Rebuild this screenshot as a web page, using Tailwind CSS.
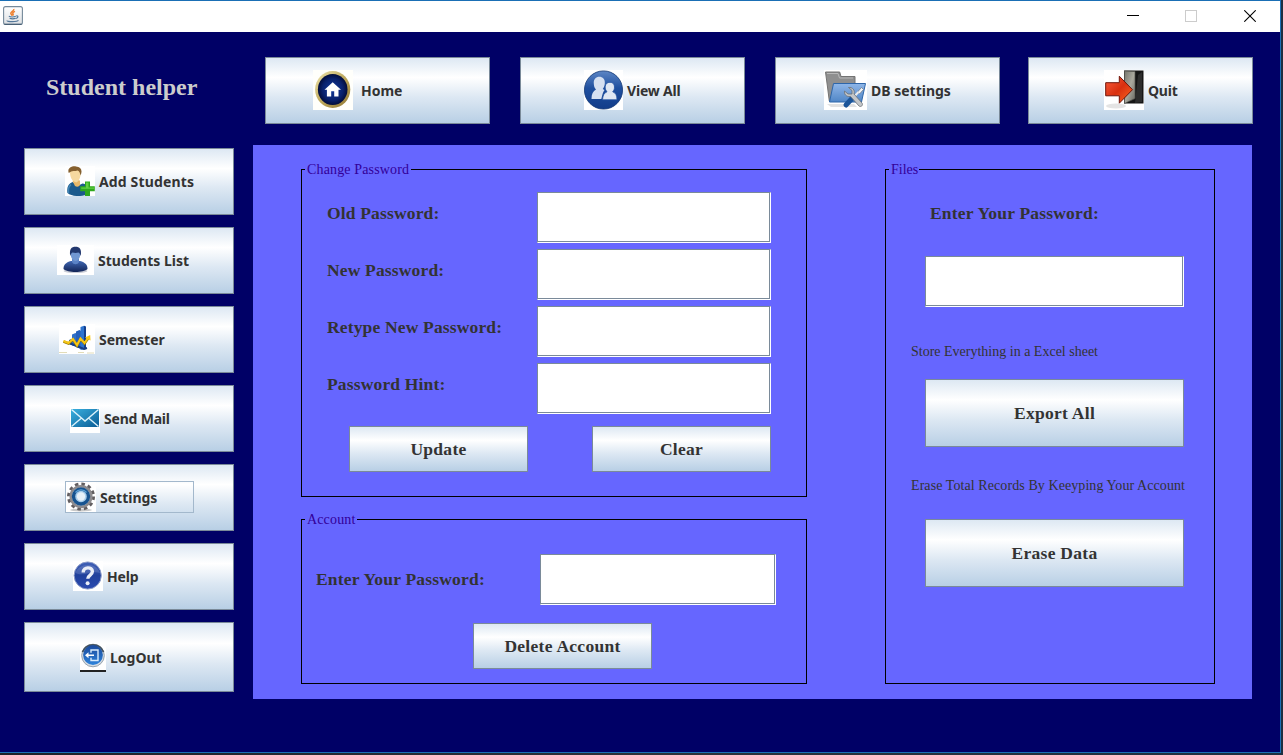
<!DOCTYPE html>
<html lang="en">
<head>
<meta charset="utf-8">
<title>Student helper</title>
<script src="https://cdn.jsdelivr.net/npm/@tailwindcss/browser@4"></script>
</head>
<body class="w-[1283px] h-[755px] overflow-hidden bg-linear-to-r from-[#1c2128] via-[#2b3038] to-[#1c2f40] text-[#333333]">
<div class="w-[1281px] h-[753px] border-t border-r border-b border-[#1a6fb5] bg-[#000066] flex flex-col [&_button]:flex [&_button]:border [&_button]:border-[#7a8a99] [&_button]:bg-[linear-gradient(#dde8f3_0%,#fff_30%,#dde8f3_60%,#b8cfe5_100%)]">
  <header class="h-[31px] bg-white flex items-start shrink-0">
    <svg class="ml-[3px] mt-[5px]" width="20" height="19" viewBox="0 0 20 19">
      <defs><linearGradient id="jv" x1="0" y1="0" x2="0" y2="1"><stop offset="0" stop-color="#fff"/><stop offset="1" stop-color="#dcdfe2"/></linearGradient></defs>
      <rect x=".6" y=".6" width="18.8" height="17.8" rx="2" fill="url(#jv)" stroke="#74899a" stroke-width="1.1"/>
      <path d="M1.500 18.300h17" stroke="#3f586d" stroke-width="1"/>
      <path d="M10.800 3C11.500 5 7.600 5.600 7.800 7.400c.1.900 1 1.300 1.400 2.300M12 5.400c-2 .8-2.600 1.600-2 2.500.4.600.2 1.100-.3 1.500" fill="none" stroke="#ee7f2d" stroke-width="1.500"/>
      <path d="M5.800 10.300c2 .8 5 .8 7 0M6.600 12.300c2 .7 4 .7 6 0M13.200 10c2.400-.5 2.200 1.900-.4 2.500M4.200 14.400c-.8 1.600 10 1.900 11.200-.1" fill="none" stroke="#54789a" stroke-width="1.200"/>
    </svg>
    <div class="ml-auto mr-[24px] mt-[9px] flex gap-[46px]">
      <svg width="12" height="12" shape-rendering="crispEdges"><path d="M0 5h12v1H0z"/></svg>
      <svg width="12" height="12" shape-rendering="crispEdges"><path d="M.5.5h11v11H.5z" fill="none" stroke="#ccc"/></svg>
      <svg class="ml-[1px]" width="12" height="12"><path d="M.3.3l11.400 11.400M11.700.3L.3 11.700" stroke="#000" stroke-width="1.100"/></svg>
    </div>
  </header>

  <div class="flex flex-1">
    <aside class="w-[253px] pl-6 shrink-0">
      <h1 class="mt-[41px] pl-[22px] font-['Liberation_Serif',serif] font-bold text-[24px] leading-[28px] text-[#cccccc]">Student helper</h1>
      <nav class="mt-[47px] flex flex-col gap-3 font-['Noto_Sans',sans-serif] font-bold text-[14px] leading-[20px] whitespace-nowrap [&>button]:w-[210px] [&>button]:items-start">
        <button class="h-[67px] pt-[17px] pl-[40px]">
          <svg width="30" height="30" viewBox="0 0 30 30"><rect width="30" height="30" fill="#fff"/>
            <path d="M2.500 27c-1-6 1-9.500 5-11l6 3.500 4-2c5 .5 6 4 5.500 10-4 3.500-16 3.500-20.500-.5z" fill="#1c5a8c"/>
            <path d="M6 18.500c-2.500 2-3 5-2.500 8.500" stroke="#3f84b5" stroke-width="1.500" fill="none"/>
            <path d="M7.500 15l2.500 5c2.500 1.500 4.500.5 5-1.500v-4l-6-1z" fill="#e8b869"/>
            <path d="M5 6c0-5 10-5 10.500 0 .3 4-.5 8-4 10.500C7 16 5 11 5 6z" fill="#f6d99f"/>
            <path d="M3.800 7C2 2.500 6-.2 11 .4c5 .3 6.800 4 4.600 9-.5-2-1-4.500-3-5C10 5.500 7 4 3.800 7z" fill="#85602f"/>
            <path d="M20 15.500h5v4.700h4.800v5H25V30h-5v-4.800h-4.800v-5H20z" fill="#2fa81d"/><path d="M21 16.500h2.500v5H29v1.300H16.200v-1.300H21z" fill="#63cf43"/></svg>
          <span class="ml-[4px] mt-[6px] tracking-[0.15px]">Add Students</span>
        </button>
        <button class="h-[67px] pt-[17px] pl-[32px]">
          <svg width="37" height="30" viewBox="0 0 37 30"><defs><linearGradient id="sl" x1="0" x2="0" y1="0" y2="1"><stop offset="0" stop-color="#3f66b1"/><stop offset="1" stop-color="#122456"/></linearGradient></defs><rect width="37" height="30" fill="#fff"/>
            <ellipse cx="18.500" cy="26" rx="12" ry="2" fill="#c9ccd6"/>
            <path d="M6.500 24c0-4 2-6.500 7.500-8h9c5.500 1.500 7.500 4 7.500 8-4 4-20 4-24 0z" fill="url(#sl)"/>
            <path d="M15 14h7v3c-1.500 3-5.500 3-7 0z" fill="#5b83c6"/>
            <ellipse cx="18.500" cy="9.500" rx="4.700" ry="6.500" fill="#7197d2"/>
            <path d="M13.300 11C12 4 14.500 1.700 18.500 1.700S25 4 23.700 11c-.7-2-1-3-2.200-3.500-2 .5-4 .5-6 0-1.200.5-1.500 1.500-2.200 3.500z" fill="#22386f"/></svg>
          <span class="ml-[4px] mt-[6px]">Students List</span>
        </button>
        <button class="h-[67px] pt-[17px] pl-[34px]">
          <svg width="36" height="30" viewBox="0 0 36 30"><rect width="36" height="30" fill="#fff"/>
            <path d="M10 16l5-2v8l-5-2z" fill="#1c4fa8"/><path d="M13 10.500l3.500-1.500 1.500 1v13l-5-2z" fill="#2f6fc8"/><path d="M17 7.500l3.500-1.500 1.500 1v18l-5-2z" fill="#2560bb"/><path d="M21.500 3l3.500-1.200 2 1V25l-5.500 1z" fill="#2d74cf"/><path d="M25 1.800l2 1V25l-2 .5z" fill="#143f8d"/>
            <path d="M10 19l15 6 3-1" stroke="#173e84" stroke-width="2" fill="none"/>
            <path d="M4.500 17.500l5 2 4.500-4 4 6 3.500-6.500 4 4.500 3.500-5" stroke="#9a7b00" stroke-width="2.600" fill="none"/>
            <path d="M4.500 17l5 2 4.500-4 4 6 3.500-6.500 4 4.500 3.500-5" stroke="#f6c614" stroke-width="2" fill="none"/>
            <path d="M26 13.500l5.200-2.500.3 5.500z" fill="#f6c614"/><path d="M0 28.500h8M19 28.500h6M28 29h7" stroke="#e2dcb8" stroke-width="1"/></svg>
          <span class="ml-[4px] mt-[6px]">Semester</span>
        </button>
        <button class="h-[67px] pt-[17px] pl-[45px]">
          <svg width="30" height="30" viewBox="0 0 30 30"><defs><linearGradient id="ml" x1="0" x2="1" y1="0" y2="1"><stop offset="0" stop-color="#39b0df"/><stop offset="1" stop-color="#0b5c95"/></linearGradient></defs><rect width="30" height="30" fill="#fff"/>
            <rect x="1" y="6" width="28" height="18" fill="url(#ml)"/>
            <path d="M1.500 6.500L15 18 28.500 6.500M1.500 23.500l10-8.500M28.500 23.500l-10-8.500" stroke="#dcf2fb" stroke-width="1.400" fill="none"/></svg>
          <span class="ml-[4px] mt-[6px] tracking-[-0.2px]">Send Mail</span>
        </button>
        <button class="h-[67px] pt-[16px] pl-[40px]">
          <span class="flex w-[129px] h-[32px] border border-[#a3b8cc]">
          <svg width="30" height="30" viewBox="0 0 30 30"><rect width="30" height="30" fill="#fff"/>
            <ellipse cx="15" cy="28" rx="11" ry="1.500" fill="#c8c8c8"/>
            <circle cx="15" cy="14.500" r="12.200" fill="none" stroke="#625e60" stroke-width="3.600" stroke-dasharray="3.400 2.990"/>
            <circle cx="15" cy="14.500" r="10.300" fill="none" stroke="#8d8b8e" stroke-width="2.500"/>
            <circle cx="15" cy="14.500" r="7.500" fill="#a9cdea" stroke="#17538f" stroke-width="3.400"/>
            <circle cx="15" cy="14.500" r="4.200" fill="#e6f0f8"/><path d="M9.500 10.500a7 7 0 0 1 11 0" stroke="#5fa4d8" stroke-width="1.300" fill="none"/></svg>
          <span class="ml-[4px] mt-[6px]">Settings</span></span>
        </button>
        <button class="h-[67px] pt-[17px] pl-[48px]">
          <svg width="30" height="30" viewBox="0 0 30 30"><defs><linearGradient id="hp" x1="0" x2="0" y1="0" y2="1"><stop offset="0" stop-color="#4262b8"/><stop offset=".5" stop-color="#20409c"/><stop offset="1" stop-color="#2b4bb0"/></linearGradient></defs><rect width="30" height="30" fill="#fff"/>
            <circle cx="14.700" cy="14.500" r="13.600" fill="url(#hp)" stroke="#8c9cc9" stroke-width="1"/>
            <path d="M2.500 12C5 2 24 1 27 12c-8-3-17 4-24.500 0z" fill="#fff" opacity=".14"/>
            <path d="M10.200 11.500c0-6 9.200-6 9.200-.9 0 3.600-4.600 3.400-4.600 7.200" stroke="#e9edf7" stroke-width="3.400" fill="none"/><circle cx="14.600" cy="22.300" r="2" fill="#e9edf7"/></svg>
          <span class="ml-[4px] mt-[6px] tracking-[-0.2px]">Help</span>
        </button>
        <button class="h-[70px] pt-[20px] pl-[55px]">
          <svg width="26" height="29" viewBox="0 0 26 29"><defs><linearGradient id="lo" x1="0" x2="0" y1="0" y2="1"><stop offset="0" stop-color="#1b4a9c"/><stop offset="1" stop-color="#2e83da"/></linearGradient></defs><rect width="26" height="29" fill="#fff"/>
            <circle cx="13" cy="12.500" r="11.300" fill="#d6dde4" stroke="#98a3ad" stroke-width="1"/>
            <path d="M2.500 9A11.300 11.300 0 0 1 23.500 9" stroke="#44535f" stroke-width="1.800" fill="none"/>
            <circle cx="13" cy="12" r="9.900" fill="url(#lo)"/>
            <path d="M11 9.800V7h7v10.500h-7v-2.700" stroke="#d8ecfd" stroke-width="1.400" fill="none"/>
            <path d="M5 12.200l3.500-3v2.200H14v1.700H8.500v2.100z" fill="#fff"/>
            <rect y="27" width="26" height="2" fill="#222"/></svg>
          <span class="ml-[4px] mt-[5px]">LogOut</span>
        </button>
      </nav>
    </aside>

    <main class="pt-[25px] [&_input]:block [&_input]:h-[51px] [&_input]:px-1 [&_input]:outline-none [&_input]:bg-white [&_input]:border [&_input]:border-white [&_input]:border-t-[#7a8a99] [&_input]:border-l-[#7a8a99] [&_input]:shadow-[inset_-1px_-1px_#7a8a99]">
      <nav class="ml-3 flex gap-[30px] font-['Noto_Sans',sans-serif] font-bold text-[14px] leading-[20px] whitespace-nowrap [&>button]:w-[225px] [&>button]:h-[67px] [&>button]:pt-[12px] [&>button]:items-start">
        <button class="pl-[47px]">
          <svg width="40" height="40" viewBox="0 0 40 40"><defs><linearGradient id="hm" x1="0" x2="1" y1="0" y2="1"><stop offset="0" stop-color="#f0e6ae"/><stop offset=".5" stop-color="#bda85c"/><stop offset="1" stop-color="#917630"/></linearGradient><radialGradient id="hb"><stop offset="0" stop-color="#123a9e"/><stop offset=".7" stop-color="#08206b"/><stop offset="1" stop-color="#020c3a"/></radialGradient></defs><rect width="40" height="40" fill="#fffffb"/>
            <ellipse cx="19.700" cy="19.500" rx="17.600" ry="18.400" fill="url(#hm)"/><ellipse cx="19.700" cy="19.500" rx="14.800" ry="15.500" fill="url(#hb)"/>
            <path d="M19.700 12.200l8.300 7.600h-2.500v6.700h-4.300v-5.200h-3v5.200h-4.300v-6.700h-2.400z" fill="#fff"/></svg>
          <span class="ml-[8px] mt-[11px]">Home</span>
        </button>
        <button class="pl-[63px]">
          <svg width="39" height="40" viewBox="0 0 39 40"><defs><linearGradient id="va" x1="0" x2="0" y1="0" y2="1"><stop offset="0" stop-color="#5d86c5"/><stop offset=".45" stop-color="#1e4f9f"/><stop offset="1" stop-color="#123c89"/></linearGradient></defs><rect width="39" height="40" fill="#fff"/>
            <circle cx="19.500" cy="20" r="19.100" fill="url(#va)" stroke="#123774" stroke-width=".8"/>
            <path d="M7.500 29c0-5 1.500-8 4.500-9.500-2-2-2-4-2.200-6C9.500 9 12 6.700 15.300 6.700s6 2.300 5.500 6.800c-.2 2-.8 4-2 5.500l1.700 1c-2 2.500-2 5-3.200 9z" fill="#d5e0f1"/>
            <path d="M18.500 29.800c.2-4 1.500-7 4.500-8-1.500-2-2-3.300-1.800-5 .2-3 2-4.500 4.800-4.500s4.500 1.700 4.500 4.700c0 2-.5 3.300-1.800 4.800 3 1 4.300 3.500 4.300 8z" fill="#dfe7f3" stroke="#1e4f9f" stroke-width=".8"/></svg>
          <span class="ml-[4px] mt-[11px] tracking-[-0.2px]">View All</span>
        </button>
        <button class="pl-[48px]">
          <svg width="43" height="40" viewBox="0 0 43 40"><defs><linearGradient id="db" x1="0" x2="0" y1="0" y2="1"><stop offset="0" stop-color="#8fb6e8"/><stop offset="1" stop-color="#5086c6"/></linearGradient></defs><rect width="43" height="40" fill="#fff"/>
            <path d="M3 34h27l3 3H7z" fill="#e2e2e2"/>
            <path d="M1.500 2h14.200l1.300 4.500h14V31H5.300L3.500 17z" fill="#8f8f8f" stroke="#737373"/>
            <path d="M3 3.500h11l1.500 4.500H29" stroke="#b8b8b8" fill="none"/>
            <path d="M9.500 13.500h32L37.500 32h-32z" fill="url(#db)" stroke="#2e66a9"/>
            <path d="M37.500 17.500l2 2-4 4.500-2-2z" fill="#f2f4f6" stroke="#69737e" stroke-width=".7"/><path d="M34.500 22L28 29" stroke="#e8ebee" stroke-width="2"/><path d="M27.500 29l-5.500 6" stroke="#1c5599" stroke-width="5" stroke-linecap="round"/>
            <path d="M24.500 17.500l3.500 3v3.500h-4l-3.500-3c-.5 3 1.500 6 6 5.500l8.500 9.500c2 1.500 4.500-.8 3-3L30 24c1.200-4-1.500-7-5.500-6.500z" fill="#c3c6c9" stroke="#6b7075" stroke-width=".8"/></svg>
          <span class="ml-[4px] mt-[11px]">DB settings</span>
        </button>
        <button class="pl-[75px] -ml-[2px]">
          <svg width="40" height="40" viewBox="0 0 40 40"><defs><linearGradient id="qd" x1="0" x2="1" y1="0" y2="1"><stop offset="0" stop-color="#75756c"/><stop offset=".5" stop-color="#aaa99e"/><stop offset="1" stop-color="#66665e"/></linearGradient><linearGradient id="qa" x1="0" x2="1" y1="0" y2="1"><stop offset="0" stop-color="#fa6040"/><stop offset=".5" stop-color="#d9300f"/><stop offset="1" stop-color="#ff6c22"/></linearGradient></defs><rect width="40" height="40" fill="#fff"/>
            <ellipse cx="12" cy="36" rx="10" ry="2.500" fill="#e4e4e4"/>
            <path d="M20 .5h19.500v33H20z" fill="#151515"/><path d="M34 5l4-3v30l-7 1z" fill="#2c2c2c"/><path d="M20.500 1l10.500 .5v27l-10.500 5z" fill="url(#qd)" stroke="#55554e" stroke-width=".7"/>
            <path d="M1.700 12.700h13.600V6.200l13.200 13.500-13.200 13.500v-7.400H1.700z" fill="url(#qa)" stroke="#6e160c" stroke-width="1"/></svg>
          <span class="ml-[4px] mt-[11px] tracking-[-0.2px]">Quit</span>
        </button>
      </nav>

      <section class="mt-[21px] w-[999px] h-[554px] bg-[#6666ff] flex pl-[48px] pt-[24px] font-['Liberation_Serif',serif] whitespace-nowrap [&_button]:justify-center [&_button]:items-center [&_button]:font-bold [&_button]:text-[17.5px] [&_button]:leading-[20px] [&_button]:tracking-[0.28px]">
        <div class="flex flex-col gap-[22px]">
          <div class="relative w-[506px] h-[328px] border border-black pt-[22px]">
            <span class="absolute left-[3px] -top-[8px] w-[106px] pl-[2px] bg-[#6666ff] text-[14px] leading-[16px] tracking-[0.15px] text-[#330099]">Change Password</span>
            <div class="flex flex-col gap-[6px] pl-[25px] font-bold text-[17.5px] leading-[20px] tracking-[0.16px] [&>label]:flex [&_span]:w-[210px] [&_span]:pt-[11px] [&_input]:w-[234px]">
              <label><span>Old Password:</span><input type="password"></label>
              <label><span>New Password:</span><input type="password"></label>
              <label><span>Retype New Password:</span><input type="password"></label>
              <label><span>Password Hint:</span><input type="password"></label>
            </div>
            <div class="mt-3 pl-[47px] flex gap-[64px]">
              <button class="w-[179px] h-[46px]">Update</button>
              <button class="w-[179px] h-[46px]">Clear</button>
            </div>
          </div>
          <div class="relative w-[506px] h-[165px] border border-black pt-[34px]">
            <span class="absolute left-[3px] -top-[8px] w-[52px] pl-[2px] bg-[#6666ff] text-[14px] leading-[16px] tracking-[0.15px] text-[#330099]">Account</span>
            <label class="flex pl-[14px] font-bold text-[17.5px] leading-[20px] tracking-[0.2px]"><span class="w-[224px] pt-[15px]">Enter Your Password:</span><input type="password" class="w-[236px]"></label>
            <button class="w-[179px] h-[46px] mt-[18px] ml-[171px]">Delete Account</button>
          </div>
        </div>
        <div class="relative ml-[78px] w-[330px] h-[515px] border border-black pt-[33px] pl-[25px] flex flex-col items-start">
          <span class="absolute left-[3px] -top-[8px] w-[30px] pl-[2px] bg-[#6666ff] text-[14px] leading-[16px] text-[#330099]">Files</span>
          <span class="ml-[19px] font-bold text-[17.5px] leading-[20px] tracking-[0.2px]">Enter Your Password:</span>
          <input type="password" class="w-[259px] mt-[33px] ml-[14px]">
          <p class="mt-[37px] text-[14px] leading-[16px]">Store Everything in a Excel sheet</p>
          <button class="w-[259px] h-[68px] mt-[19px] ml-[14px]">Export All</button>
          <p class="mt-[31px] text-[14px] leading-[16px] tracking-[0.08px]">Erase Total Records By Keeyping Your Account</p>
          <button class="w-[259px] h-[68px] mt-[25px] ml-[14px]">Erase Data</button>
        </div>
      </section>
    </main>
  </div>
</div>
</body>
</html>
